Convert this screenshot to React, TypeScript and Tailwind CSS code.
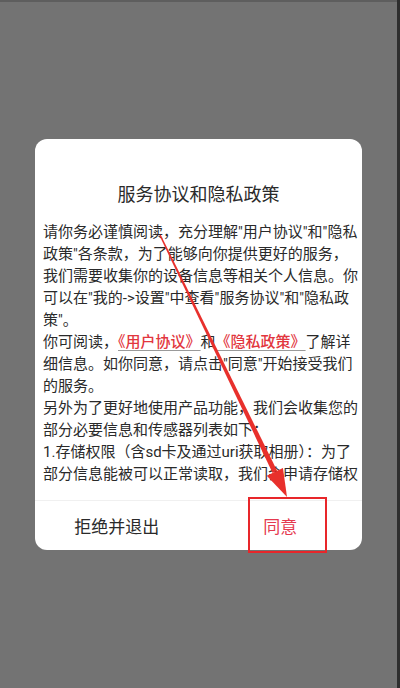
import React from "react";

const lines: React.ReactNode[] = [
  "请你务必谨慎阅读，充分理解\"用户协议\"和\"隐私",
  "政策\"各条款，为了能够向你提供更好的服务，",
  "我们需要收集你的设备信息等相关个人信息。你",
  "可以在\"我的->设置\"中查看\"服务协议\"和\"隐私政",
  "策\"。",
  <>
    你可阅读，
    <span className="text-[#e2363e] font-medium underline decoration-[#9a9a9a] underline-offset-[3px]">《用户协议》</span>
    和
    <span className="text-[#e2363e] font-medium underline decoration-[#9a9a9a] underline-offset-[3px]">《隐私政策》</span>
    了解详
  </>,
  "细信息。如你同意，请点击\"同意\"开始接受我们",
  "的服务。",
  "另外为了更好地使用产品功能，我们会收集您的",
  "部分必要信息和传感器列表如下：",
  "1.存储权限（含sd卡及通过uri获取相册）：为了",
  "部分信息能被可以正常读取，我们会申请存储权",
];

export default function App() {
  return (
    <div className="relative w-[400px] h-[688px] bg-[#737373] overflow-hidden flex font-[Roboto,'Noto_Sans_CJK_SC',sans-serif]">
      <div className="flex-1 flex flex-col">
        <div className="h-[2px] bg-[#5e5e5e]" />
        <div className="pl-[35px] pt-[137px]">
          <div className="w-[327px] h-[411px] bg-white rounded-[12px] flex flex-col overflow-hidden">
            <div className="h-[349px] overflow-hidden pt-[43px]">
              <div className="h-[26px] leading-[26px] text-[18px] text-center text-[#2a2a2a]">
                服务协议和隐私政策
              </div>
              <div className="mt-[13px] pl-[8px] text-[15px] leading-[22px] text-[#2a2a2a]">
                {lines.map((l, i) => (
                  <div key={i} className="whitespace-nowrap">
                    {l}
                  </div>
                ))}
              </div>
            </div>
            <div className="mt-[12px] h-[50px] border-t border-[#f0f0f0] grid grid-cols-2">
              <div className="flex items-center justify-center pt-[4px] text-[17px] text-[#2a2a2a]">
                拒绝并退出
              </div>
              <div className="flex items-center justify-center pt-[4px] text-[17px] text-[#e5394f]">
                同意
              </div>
            </div>
          </div>
        </div>
      </div>
      <div className="w-[3px] bg-[#2e2e2e]" />
      <div className="absolute left-[248px] top-[497px] w-[79px] h-[56px] border-2 border-[#e8262a]" />
      <svg
        className="absolute left-0 top-0 pointer-events-none"
        width="400"
        height="688"
        viewBox="0 0 400 688"
      >
        <polygon
          points="160.68,234.67 159.32,235.33 272.6,472.9 277.1,470.7"
          fill="#e8302c"
        />
        <polygon points="287,497 282.95,467.9 266.75,475.7" fill="#e8302c" />
      </svg>
    </div>
  );
}
